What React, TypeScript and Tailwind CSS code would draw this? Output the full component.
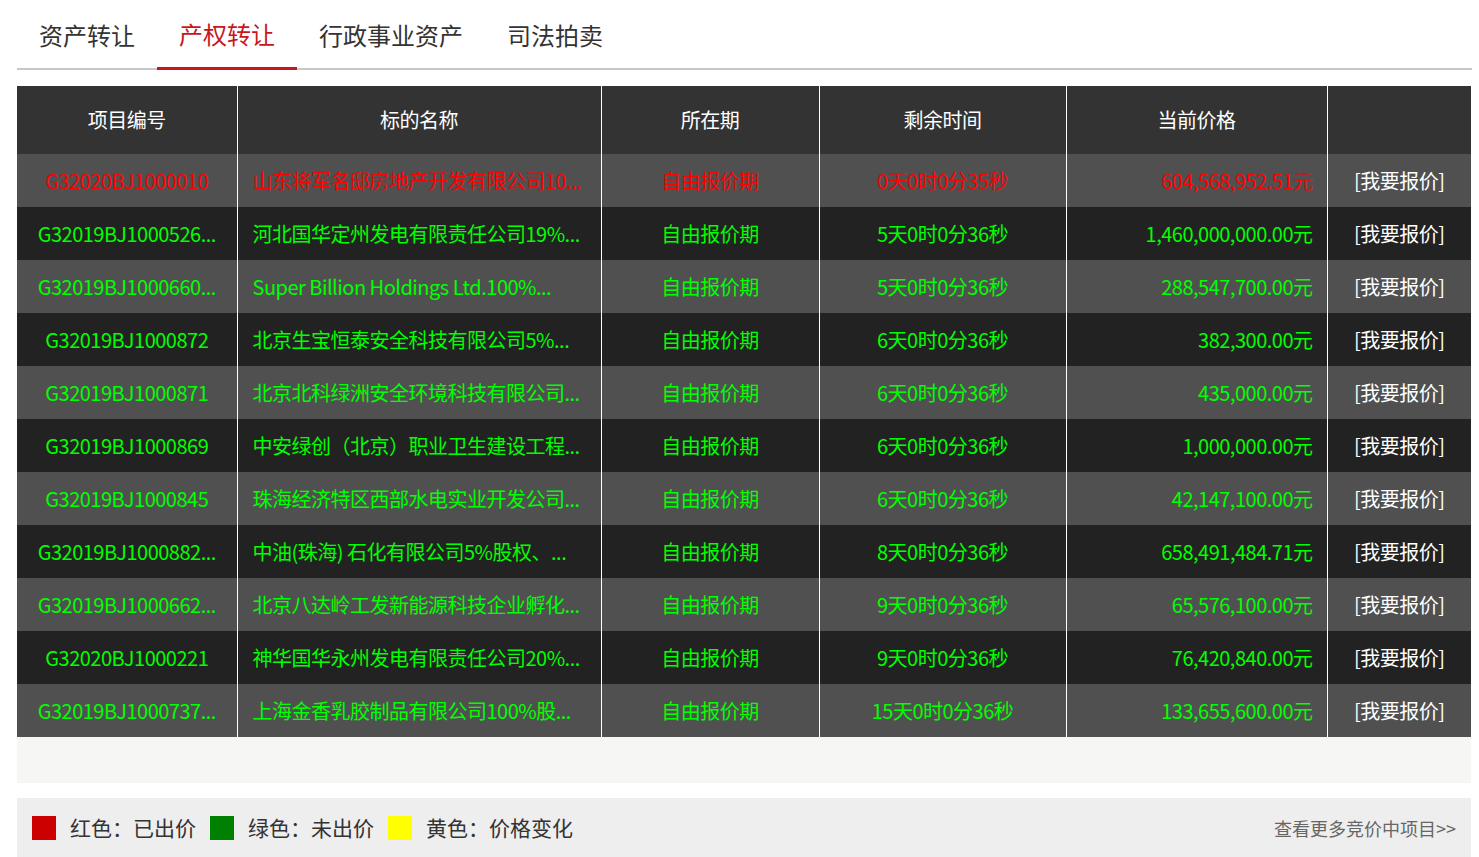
import React from 'react';

const rows = [
  ['G32020BJ1000010', '山东将军名邸房地产开发有限公司10...', '自由报价期', '0天0时0分35秒', '604,568,952.51元'],
  ['G32019BJ1000526...', '河北国华定州发电有限责任公司19%...', '自由报价期', '5天0时0分36秒', '1,460,000,000.00元'],
  ['G32019BJ1000660...', 'Super Billion Holdings Ltd.100%...', '自由报价期', '5天0时0分36秒', '288,547,700.00元'],
  ['G32019BJ1000872', '北京生宝恒泰安全科技有限公司5%...', '自由报价期', '6天0时0分36秒', '382,300.00元'],
  ['G32019BJ1000871', '北京北科绿洲安全环境科技有限公司...', '自由报价期', '6天0时0分36秒', '435,000.00元'],
  ['G32019BJ1000869', '中安绿创（北京）职业卫生建设工程...', '自由报价期', '6天0时0分36秒', '1,000,000.00元'],
  ['G32019BJ1000845', '珠海经济特区西部水电实业开发公司...', '自由报价期', '6天0时0分36秒', '42,147,100.00元'],
  ['G32019BJ1000882...', '中油(珠海) 石化有限公司5%股权、...', '自由报价期', '8天0时0分36秒', '658,491,484.71元'],
  ['G32019BJ1000662...', '北京八达岭工发新能源科技企业孵化...', '自由报价期', '9天0时0分36秒', '65,576,100.00元'],
  ['G32020BJ1000221', '神华国华永州发电有限责任公司20%...', '自由报价期', '9天0时0分36秒', '76,420,840.00元'],
  ['G32019BJ1000737...', '上海金香乳胶制品有限公司100%股...', '自由报价期', '15天0时0分36秒', '133,655,600.00元'],
];

const tabs = ['资产转让', '产权转让', '行政事业资产', '司法拍卖'];

export default function App() {
  return (
    <div className="w-[1479px] h-[857px] bg-white overflow-hidden" style={{ fontFamily: '"Noto Sans CJK SC", "Noto Sans", sans-serif' }}>
      <div className="ml-[17px] w-[1455px] h-[70px] border-b-2 border-[#c8c8c8] flex">
        {tabs.map((t, i) => (
          <div
            key={t}
            className={`h-[70px] px-[22px] flex items-center text-[24px] ${i === 1 ? 'text-[#c8161d] border-b-[3px] border-[#c8161d] mb-[-2px]' : 'text-[#333]'}`}
          >
            {t}
          </div>
        ))}
      </div>
      <table className="mt-[16px] ml-[17px] w-[1454px] border-collapse table-fixed text-[20px] tracking-tight">
        <colgroup>
          <col className="w-[220px]" />
          <col className="w-[364px]" />
          <col className="w-[218px]" />
          <col className="w-[247px]" />
          <col className="w-[261px]" />
          <col />
        </colgroup>
        <thead>
          <tr className="h-[68px] bg-[#333333] text-white">
            {['项目编号', '标的名称', '所在期', '剩余时间', '当前价格', ''].map((h, i) => (
              <th key={i} className="font-normal border-l border-white first:border-l-0">{h}</th>
            ))}
          </tr>
        </thead>
        <tbody>
          {rows.map((r, i) => {
            const c = i === 0 ? 'text-[#ff0000]' : 'text-[#00ff00]';
            return (
              <tr key={i} className={`h-[53px] ${i % 2 === 0 ? 'bg-[#505050]' : 'bg-[#222222]'}`}>
                <td className={`${c} text-center whitespace-nowrap px-2`}>{r[0]}</td>
                <td className={`${c} border-l border-white px-[15px] whitespace-nowrap overflow-hidden`}>{r[1]}</td>
                <td className={`${c} border-l border-white text-center`}>{r[2]}</td>
                <td className={`${c} border-l border-white text-center`}>{r[3]}</td>
                <td className={`${c} border-l border-white text-right pr-[14px]`}>{r[4]}</td>
                <td className="border-l border-white text-center text-white">[我要报价]</td>
              </tr>
            );
          })}
        </tbody>
      </table>
      <div className="ml-[17px] w-[1454px] h-[46px] bg-[#f6f6f4]" />
      <div className="mt-[15px] ml-[17px] w-[1454px] h-[60px] bg-[#eeeeee] flex items-center px-[15px] text-[21px] text-[#333]">
        <span className="w-[24px] h-[24px] bg-[#cc0000] mr-[14px]" />
        <span className="mr-[14px]">红色：已出价</span>
        <span className="w-[24px] h-[24px] bg-[#008000] mr-[14px]" />
        <span className="mr-[14px]">绿色：未出价</span>
        <span className="w-[24px] h-[24px] bg-[#ffff00] mr-[14px]" />
        <span>黄色：价格变化</span>
        <span className="ml-auto text-[18px] text-[#666]">查看更多竞价中项目&gt;&gt;</span>
      </div>
    </div>
  );
}
